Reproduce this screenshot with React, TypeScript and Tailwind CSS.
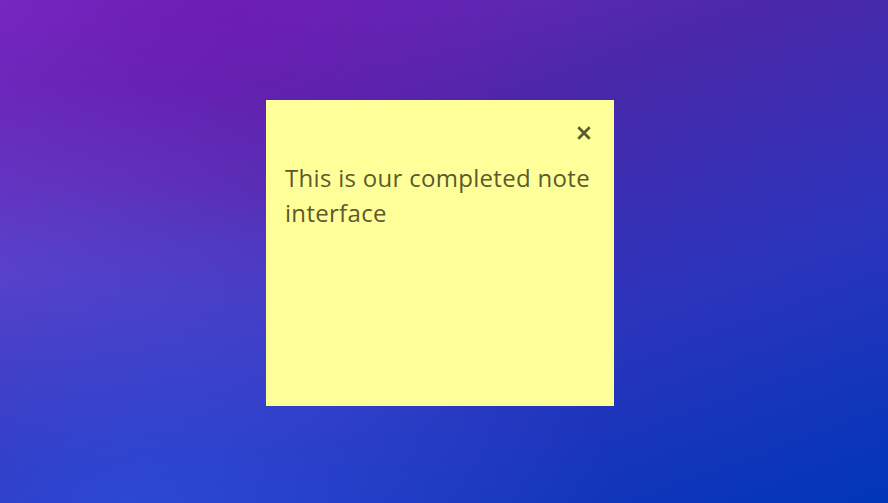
export default function App() {
  return (
    <div className="h-[503px] w-[888px] overflow-hidden bg-[radial-gradient(ellipse_at_15%_100%,rgba(45,80,220,0.7)_0%,rgba(45,80,220,0)_45%),radial-gradient(ellipse_at_0%_55%,rgba(115,85,230,0.5)_0%,rgba(115,85,230,0)_50%),radial-gradient(ellipse_at_25%_0%,rgba(110,20,170,0.6)_0%,rgba(110,20,170,0)_40%),linear-gradient(160deg,#7a2cc8_0%,#4a28a8_35%,#2c34bc_65%,#0036b8_100%)] pt-[100px] pl-[266px]">
      <div className="flex h-[306px] w-[348px] flex-col bg-[#ffff99] pt-5 pr-5 pl-[19px]">
        <div className="flex justify-end pr-[2px] pt-[5px]">
          <button className="flex h-[16px] w-[16px] items-center justify-center text-[#5b5b2e]">
            <svg viewBox="0 0 16 16" className="h-[16px] w-[16px]">
              <path d="M2.3 2.3 L13.7 13.7 M13.7 2.3 L2.3 13.7" stroke="currentColor" strokeWidth="2.8" strokeLinecap="butt" />
            </svg>
          </button>
        </div>
        <p className="mt-[19px] font-['Open_Sans',sans-serif] text-[24px] leading-[35px] tracking-[0.3px] text-[#5c5a2d]">
          This is our completed note interface
        </p>
      </div>
    </div>
  );
}
